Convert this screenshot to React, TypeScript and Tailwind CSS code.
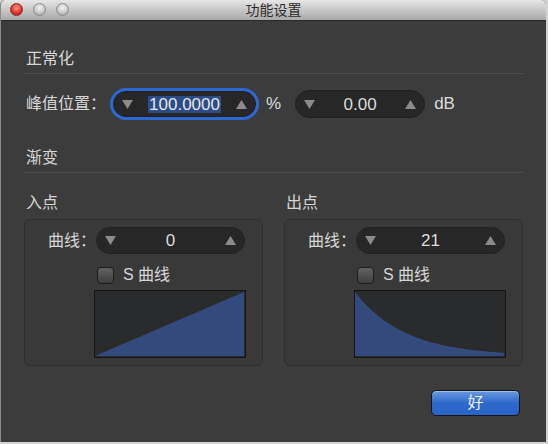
import React from 'react';

const FONT = "font-['Liberation_Sans','Noto_Sans_CJK_SC',sans-serif]";

const ArrowDown = () => (
  <svg width="11" height="9" viewBox="0 0 11 9" className="shrink-0">
    <polygon points="0,0 11,0 5.5,9" fill="#8b8b8b" />
  </svg>
);

const ArrowUp = () => (
  <svg width="11" height="9" viewBox="0 0 11 9" className="shrink-0">
    <polygon points="0,9 11,9 5.5,0" fill="#8b8b8b" />
  </svg>
);

const Stepper: React.FC<{
  value: string;
  className: string;
  focused?: boolean;
}> = ({ value, className, focused }) => (
  <div
    className={`flex items-center justify-between rounded-full bg-[#272727] border border-[#222] px-[8px] ${
      focused ? 'ring-[3px] ring-[#2e66d2] border-[#1c1c1c]' : ''
    } ${className}`}
  >
    <ArrowDown />
    {focused ? (
      <span className="bg-[#2c4c86] px-[1px] leading-[17px] text-[17px] text-[#e6e6e6]">{value}</span>
    ) : (
      <span className="text-[17px] leading-[17px] text-[#dcdcdc]">{value}</span>
    )}
    <ArrowUp />
  </div>
);

const Heading: React.FC<{ children: React.ReactNode }> = ({ children }) => (
  <>
    <div className="pl-[2px] h-[18px] leading-[18px] text-[16px] text-[#d6d6d6]">{children}</div>
    <div className="mt-[5px] h-px bg-[#4f4f4f]" />
  </>
);

const LinearGraph = () => (
  <svg width="152" height="68" viewBox="0 0 152 68" className="ml-[69px] mt-[6px] block">
    <rect x="0" y="0" width="152" height="68" fill="#2a2b2d" />
    <polygon points="1,66 150,2 150,66" fill="#344a7c" />
    <rect x="0.5" y="0.5" width="151" height="67" fill="none" stroke="#141414" />
  </svg>
);

const DecayGraph = () => {
  const pts: string[] = [];
  for (let i = 0; i <= 60; i++) {
    const t = i / 60;
    const x = 1 + t * 149;
    const y = 2 + (1 - Math.exp(-3 * t)) * 64;
    pts.push(`${x.toFixed(1)},${y.toFixed(1)}`);
  }
  const d = `M1,66 L${pts.join(' L')} L150,66 Z`;
  return (
    <svg width="152" height="68" viewBox="0 0 152 68" className="ml-[69px] mt-[6px] block">
      <rect x="0" y="0" width="152" height="68" fill="#2a2b2d" />
      <path d={d} fill="#344a7c" />
      <rect x="0.5" y="0.5" width="151" height="67" fill="none" stroke="#141414" />
    </svg>
  );
};

const FadeGroup: React.FC<{ title: string; value: string; graph: React.ReactNode }> = ({
  title,
  value,
  graph,
}) => (
  <div className="w-[239px]">
    <div className="pl-[2px] h-[18px] leading-[18px] text-[16px] text-[#d6d6d6]">{title}</div>
    <div className="mt-[7px] h-[147px] rounded-[6px] border border-[#2f2f2f] bg-[#393939] pt-[7px]">
      <div className="flex items-center">
        <span className="ml-[23px] w-[48px] text-[16px] leading-[18px] text-[#d6d6d6]">曲线：</span>
        <Stepper value={value} className="w-[149px] h-[27px]" />
      </div>
      <div className="mt-[12px] ml-[72px] flex items-center">
        <div className="w-[17px] h-[17px] rounded-[4px] border border-[#1e1e1e] bg-gradient-to-b from-[#636363] to-[#3e3e3e]" />
        <span className="ml-[9px] text-[16px] leading-[18px] text-[#d6d6d6]">S 曲线</span>
      </div>
      {graph}
    </div>
  </div>
);

export default function App() {
  return (
    <div className={`w-[548px] h-[444px] bg-[#d2d2d2] ${FONT}`}>
      <div className="w-[546px] h-[442px] flex flex-col bg-[#3c3c3c] border-l border-[#8a8a8a] rounded-t-[5px] overflow-hidden">
        {/* title bar */}
        <div className="relative h-[21px] shrink-0 flex items-center justify-center bg-gradient-to-b from-[#e6e6e6] to-[#a9a9a9] border-b border-[#2a2a2a]">
          <div className="absolute left-[9px] top-[3px] flex gap-[10px]">
            <div className="w-[13px] h-[13px] rounded-full bg-[radial-gradient(circle_at_50%_35%,#ff9a8f,#e0352b_55%,#9c1a12)] border border-[#8a2a22]" />
            <div className="w-[13px] h-[13px] rounded-full bg-[radial-gradient(circle_at_50%_35%,#f4f4f4,#c9c9c9_55%,#8f8f8f)] border border-[#8a8a8a]" />
            <div className="w-[13px] h-[13px] rounded-full bg-[radial-gradient(circle_at_50%_35%,#f4f4f4,#c9c9c9_55%,#8f8f8f)] border border-[#8a8a8a]" />
          </div>
          <span className="text-[14px] leading-[16px] text-[#2c2c2c]">功能设置</span>
        </div>

        {/* body */}
        <div className="flex flex-col pl-[23px] pr-[23px] pt-[29px]">
          <Heading>正常化</Heading>

          <div className="mt-[16px] h-[28px] flex items-center">
            <span className="ml-[2px] w-[87px] text-[16px] leading-[18px] text-[#d6d6d6]">峰值位置：</span>
            <Stepper value="100.0000" focused className="w-[143px] h-[26px]" />
            <span className="ml-[10px] text-[17px] text-[#dcdcdc]">%</span>
            <Stepper value="0.00" className="ml-[14px] w-[130px] h-[28px]" />
            <span className="ml-[9px] text-[17px] text-[#dcdcdc]">dB</span>
          </div>

          <div className="mt-[31px]">
            <Heading>渐变</Heading>
          </div>

          <div className="mt-[21px] flex gap-[21px]">
            <FadeGroup title="入点" value="0" graph={<LinearGraph />} />
            <FadeGroup title="出点" value="21" graph={<DecayGraph />} />
          </div>

          <div className="mt-[24px] flex justify-end pr-[3px]">
            <button className="w-[89px] h-[26px] rounded-[5px] border border-[#151515] bg-gradient-to-b from-[#6a9be0] via-[#2d68cc] to-[#2a64c8] text-[16px] text-[#eef2f8] shadow-[inset_0_1px_0_rgba(255,255,255,0.35)]">
              好
            </button>
          </div>
        </div>
      </div>
    </div>
  );
}
